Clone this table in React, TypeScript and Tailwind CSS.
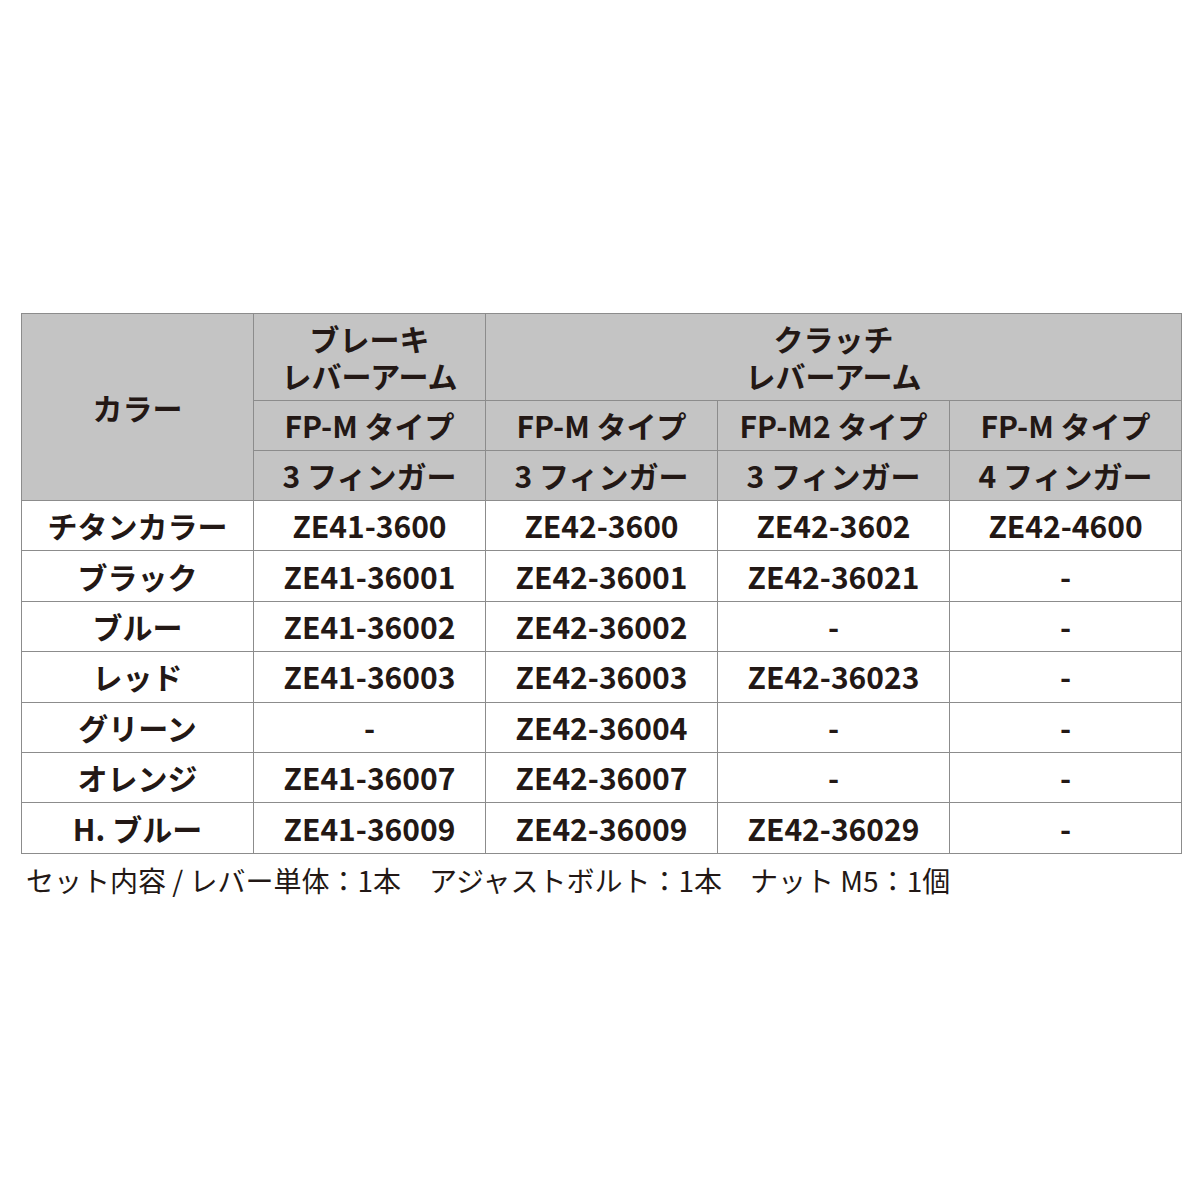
const rows: [string, string, string, string, string][] = [
  ["チタンカラー", "ZE41-3600", "ZE42-3600", "ZE42-3602", "ZE42-4600"],
  ["ブラック", "ZE41-36001", "ZE42-36001", "ZE42-36021", "-"],
  ["ブルー", "ZE41-36002", "ZE42-36002", "-", "-"],
  ["レッド", "ZE41-36003", "ZE42-36003", "ZE42-36023", "-"],
  ["グリーン", "-", "ZE42-36004", "-", "-"],
  ["オレンジ", "ZE41-36007", "ZE42-36007", "-", "-"],
  ["H. ブルー", "ZE41-36009", "ZE42-36009", "ZE42-36029", "-"],
];

const cell = "border border-[#8c8c8c] text-center align-middle p-0";

export default function App() {
  return (
    <div
      className="w-[1200px] h-[1200px] bg-white text-[#231815] pt-[313px] pl-[21px]"
      style={{ fontFamily: '"Noto Sans CJK JP", "Noto Sans", sans-serif' }}
    >
      <table className="border-collapse table-fixed w-[1161px] text-[30px] font-bold leading-[37px]">
        <colgroup>
          <col className="w-[232px]" />
          <col className="w-[232px]" />
          <col className="w-[232px]" />
          <col className="w-[232px]" />
          <col className="w-[232px]" />
        </colgroup>
        <thead className="bg-[#c4c4c4]">
          <tr className="h-[87px]">
            <th rowSpan={3} className={cell}>
              カラー
            </th>
            <th className={cell}>
              ブレーキ
              <br />
              レバーアーム
            </th>
            <th colSpan={3} className={cell}>
              クラッチ
              <br />
              レバーアーム
            </th>
          </tr>
          <tr className="h-[50px]">
            <th className={cell}>FP-M タイプ</th>
            <th className={cell}>FP-M タイプ</th>
            <th className={cell}>FP-M2 タイプ</th>
            <th className={cell}>FP-M タイプ</th>
          </tr>
          <tr className="h-[50px]">
            <th className={cell}>3 フィンガー</th>
            <th className={cell}>3 フィンガー</th>
            <th className={cell}>3 フィンガー</th>
            <th className={cell}>4 フィンガー</th>
          </tr>
        </thead>
        <tbody>
          {rows.map((r) => (
            <tr key={r[0]} className="h-[50.4px]">
              {r.map((v, i) => (
                <td key={i} className={cell}>
                  {v}
                </td>
              ))}
            </tr>
          ))}
        </tbody>
      </table>
      <p className="mt-[8px] pl-[5px] text-[28px] leading-[36px] whitespace-pre">
        {"セット内容 / レバー単体：1本　アジャストボルト：1本　ナット M5：1個"}
      </p>
    </div>
  );
}
